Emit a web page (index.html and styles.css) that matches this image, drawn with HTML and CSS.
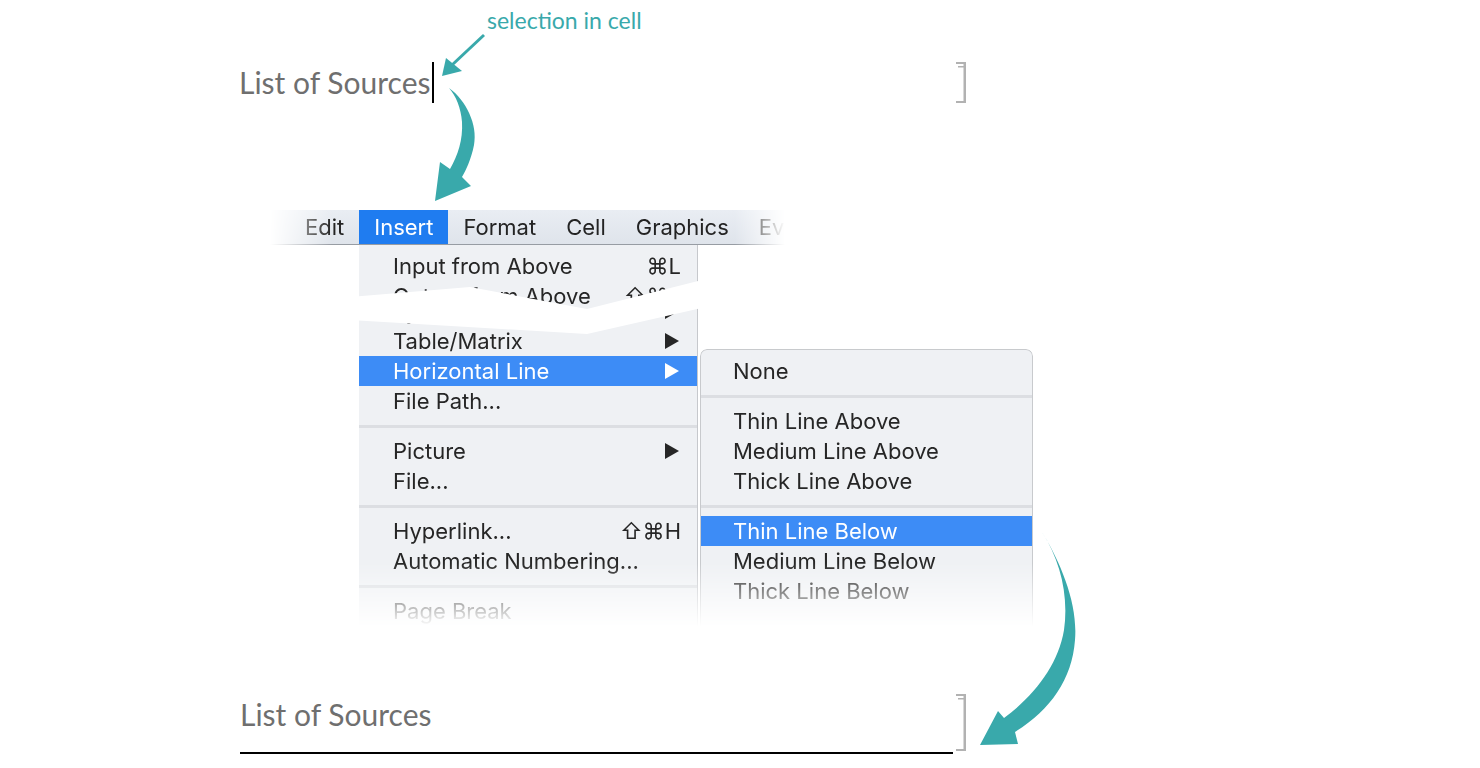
FILE: index.html
```html
<!DOCTYPE html>
<html>
<head>
<meta charset="utf-8">
<link rel="stylesheet" href="styles.css">
</head>
<body>
<div class="page">
  <div class="note">selection in cell</div>

  <div class="cell cell-top">
    <div class="cell-body">
      <span class="title">List of Sources</span><span class="caret"></span>
    </div>
    <svg class="bracket" width="10" height="41" viewBox="0 0 10 41">
      <rect x="0" y="0" width="10" height="2" fill="#b2b2b2"/>
      <rect x="2" y="4" width="6" height="1.5" fill="#b2b2b2"/>
      <rect x="7.5" y="0" width="2.5" height="41" fill="#b2b2b2"/>
      <rect x="0" y="39" width="10" height="2" fill="#b2b2b2"/>
    </svg>
  </div>

  <div class="menus">
    <div class="menubar">
      <span class="mb-item">Edit</span>
      <span class="mb-item active">Insert</span>
      <span class="mb-item">Format</span>
      <span class="mb-item">Cell</span>
      <span class="mb-item">Graphics</span>
      <span class="mb-item">Ev</span>
    </div>
    <div class="drops">
      <div class="dropdown">
        <div class="row"><span>Input from Above</span><span class="key">⌘L</span></div>
        <div class="row"><span>Output from Above</span><span class="key">⇧⌘L</span></div>
        <div class="row overlap"><span>Typesetting</span><span class="tri"></span></div>
        <div class="row"><span>Table/Matrix</span><span class="tri"></span></div>
        <div class="row hl"><span>Horizontal Line</span><span class="tri"></span></div>
        <div class="row"><span>File Path...</span></div>
        <div class="sep"></div>
        <div class="row"><span>Picture</span><span class="tri"></span></div>
        <div class="row"><span>File...</span></div>
        <div class="sep"></div>
        <div class="row"><span>Hyperlink...</span><span class="key">⇧⌘H</span></div>
        <div class="row"><span>Automatic Numbering...</span></div>
        <div class="sep"></div>
        <div class="row"><span>Page Break</span></div>
      </div>
      <div class="submenu">
        <div class="row"><span>None</span></div>
        <div class="sep"></div>
        <div class="row"><span>Thin Line Above</span></div>
        <div class="row"><span>Medium Line Above</span></div>
        <div class="row"><span>Thick Line Above</span></div>
        <div class="sep"></div>
        <div class="row hl"><span>Thin Line Below</span></div>
        <div class="row"><span>Medium Line Below</span></div>
        <div class="row"><span>Thick Line Below</span></div>
      </div>
    </div>
  </div>

  <div class="cell cell-bottom">
    <div class="cell-body">
      <span class="title">List of Sources</span>
    </div>
    <svg class="bracket" width="10" height="57" viewBox="0 0 10 57">
      <rect x="0" y="0" width="10" height="2" fill="#b2b2b2"/>
      <rect x="2" y="4" width="6" height="1.5" fill="#b2b2b2"/>
      <rect x="7.5" y="0" width="2.5" height="57" fill="#b2b2b2"/>
      <rect x="0" y="55" width="10" height="2" fill="#b2b2b2"/>
    </svg>
  </div>

  <svg class="overlay" width="1480" height="768" viewBox="0 0 1480 768">
    <polygon points="350,297 470,287 587,309 706,279 706,307 587,334 350,320" fill="#ffffff"/>
    <line x1="484" y1="35" x2="452" y2="65" stroke="#39a9ab" stroke-width="3"/>
    <polygon points="442,76 446,58 462,71" fill="#39a9ab"/>
    <path d="M449,88 C466,100 478,125 474,145 C471,160 466,170 462,177 L471,186 L435,201 L440,162 L450,169 C458,155 463,140 462,122 C461,108 456,96 449,88 Z" fill="#39a9ab"/>
    <path d="M1042,532 C1062,565 1078,605 1075,640 C1072,680 1050,710 1015,732 L1018,744 L980,745 L998,711 L1004,718 C1035,695 1058,665 1064,630 C1069,595 1060,560 1042,532 Z" fill="#39a9ab"/>
  </svg>
</div>
</body>
</html>
```

FILE: styles.css
```css
* { box-sizing: border-box; }
html, body { margin: 0; padding: 0; background: #ffffff; }
body { font-family: Lato, "Noto Sans", sans-serif; }

.page {
  position: relative;
  width: 1480px;
  height: 768px;
  overflow: hidden;
}

.note {
  margin-left: 487px;
  padding-top: 7px;
  height: 34px;
  font-size: 23px;
  line-height: 26px;
  color: #39a9ab;
}

.cell {
  display: flex;
  justify-content: space-between;
}
.cell-body {
  display: flex;
  align-items: flex-start;
}
.title {
  font-size: 30px;
  line-height: 41px;
  color: #6f6f6f;
}
.caret {
  width: 2px;
  height: 41px;
  margin-left: 2px;
  background: #000;
}
.bracket { flex: none; display: block; }

.cell-top {
  margin: 28px 0 0 239px;
  width: 727px;
  height: 41px;
}

.cell-bottom {
  margin: 68px 0 0 240px;
  width: 726px;
  height: 60px;
}
.cell-bottom .cell-body {
  width: 713px;
  height: 60px;
  border-bottom: 2px solid #000;
}

.menus {
  margin: 107px 0 0 270px;
  width: 780px;
  font-family: Inter, "DejaVu Sans", sans-serif;
  font-size: 22px;
  color: #262626;
}

.menubar {
  display: flex;
  width: 520px;
  height: 35px;
  padding-left: 20px;
  white-space: nowrap;
  background: linear-gradient(#e9edf3, #dfe4eb);
  border-bottom: 1px solid #979ca3;
  -webkit-mask-image: linear-gradient(to right, transparent 0, #000 62px, #000 465px, transparent 515px);
  mask-image: linear-gradient(to right, transparent 0, #000 62px, #000 465px, transparent 515px);
}
.mb-item {
  padding: 0 15px;
  line-height: 34px;
  color: #232323;
}
.mb-item.active {
  background: #1f7cf0;
  color: #ffffff;
}

.drops {
  display: flex;
  align-items: flex-start;
  margin-left: 89px;
}

.dropdown {
  width: 339px;
  height: 381px;
  padding-top: 6px;
  background: #eff1f4;
  border-right: 1px solid #c6c8cc;
  -webkit-mask-image: linear-gradient(to bottom, #000 0, #000 318px, transparent 382px);
  mask-image: linear-gradient(to bottom, #000 0, #000 318px, transparent 382px);
}

.submenu {
  width: 333px;
  height: 277px;
  margin: 104px 0 0 2px;
  padding-top: 6px;
  background: #eff1f4;
  border: 1px solid #c8cacd;
  border-bottom: none;
  border-radius: 7px 7px 0 0;
  -webkit-mask-image: linear-gradient(to bottom, #000 0, #000 214px, transparent 278px);
  mask-image: linear-gradient(to bottom, #000 0, #000 214px, transparent 278px);
}

.row {
  display: flex;
  justify-content: space-between;
  align-items: center;
  height: 30px;
  padding: 0 16px 0 34px;
  white-space: nowrap;
  color: #262626;
}
.submenu .row { padding-left: 32px; }
.row.overlap { margin-top: -15px; }
.row.hl {
  background: #3d8cf6;
  color: #ffffff;
}

.tri {
  width: 0;
  height: 0;
  margin-right: 2px;
  border-left: 14px solid #262626;
  border-top: 8px solid transparent;
  border-bottom: 8px solid transparent;
}
.hl .tri { border-left-color: #ffffff; }

.sep {
  height: 20px;
  display: flex;
  align-items: center;
}
.sep::before {
  content: "";
  width: 100%;
  height: 3px;
  background: #dcdee2;
}

.overlay {
  position: absolute;
  left: 0;
  top: 0;
  pointer-events: none;
}
```
